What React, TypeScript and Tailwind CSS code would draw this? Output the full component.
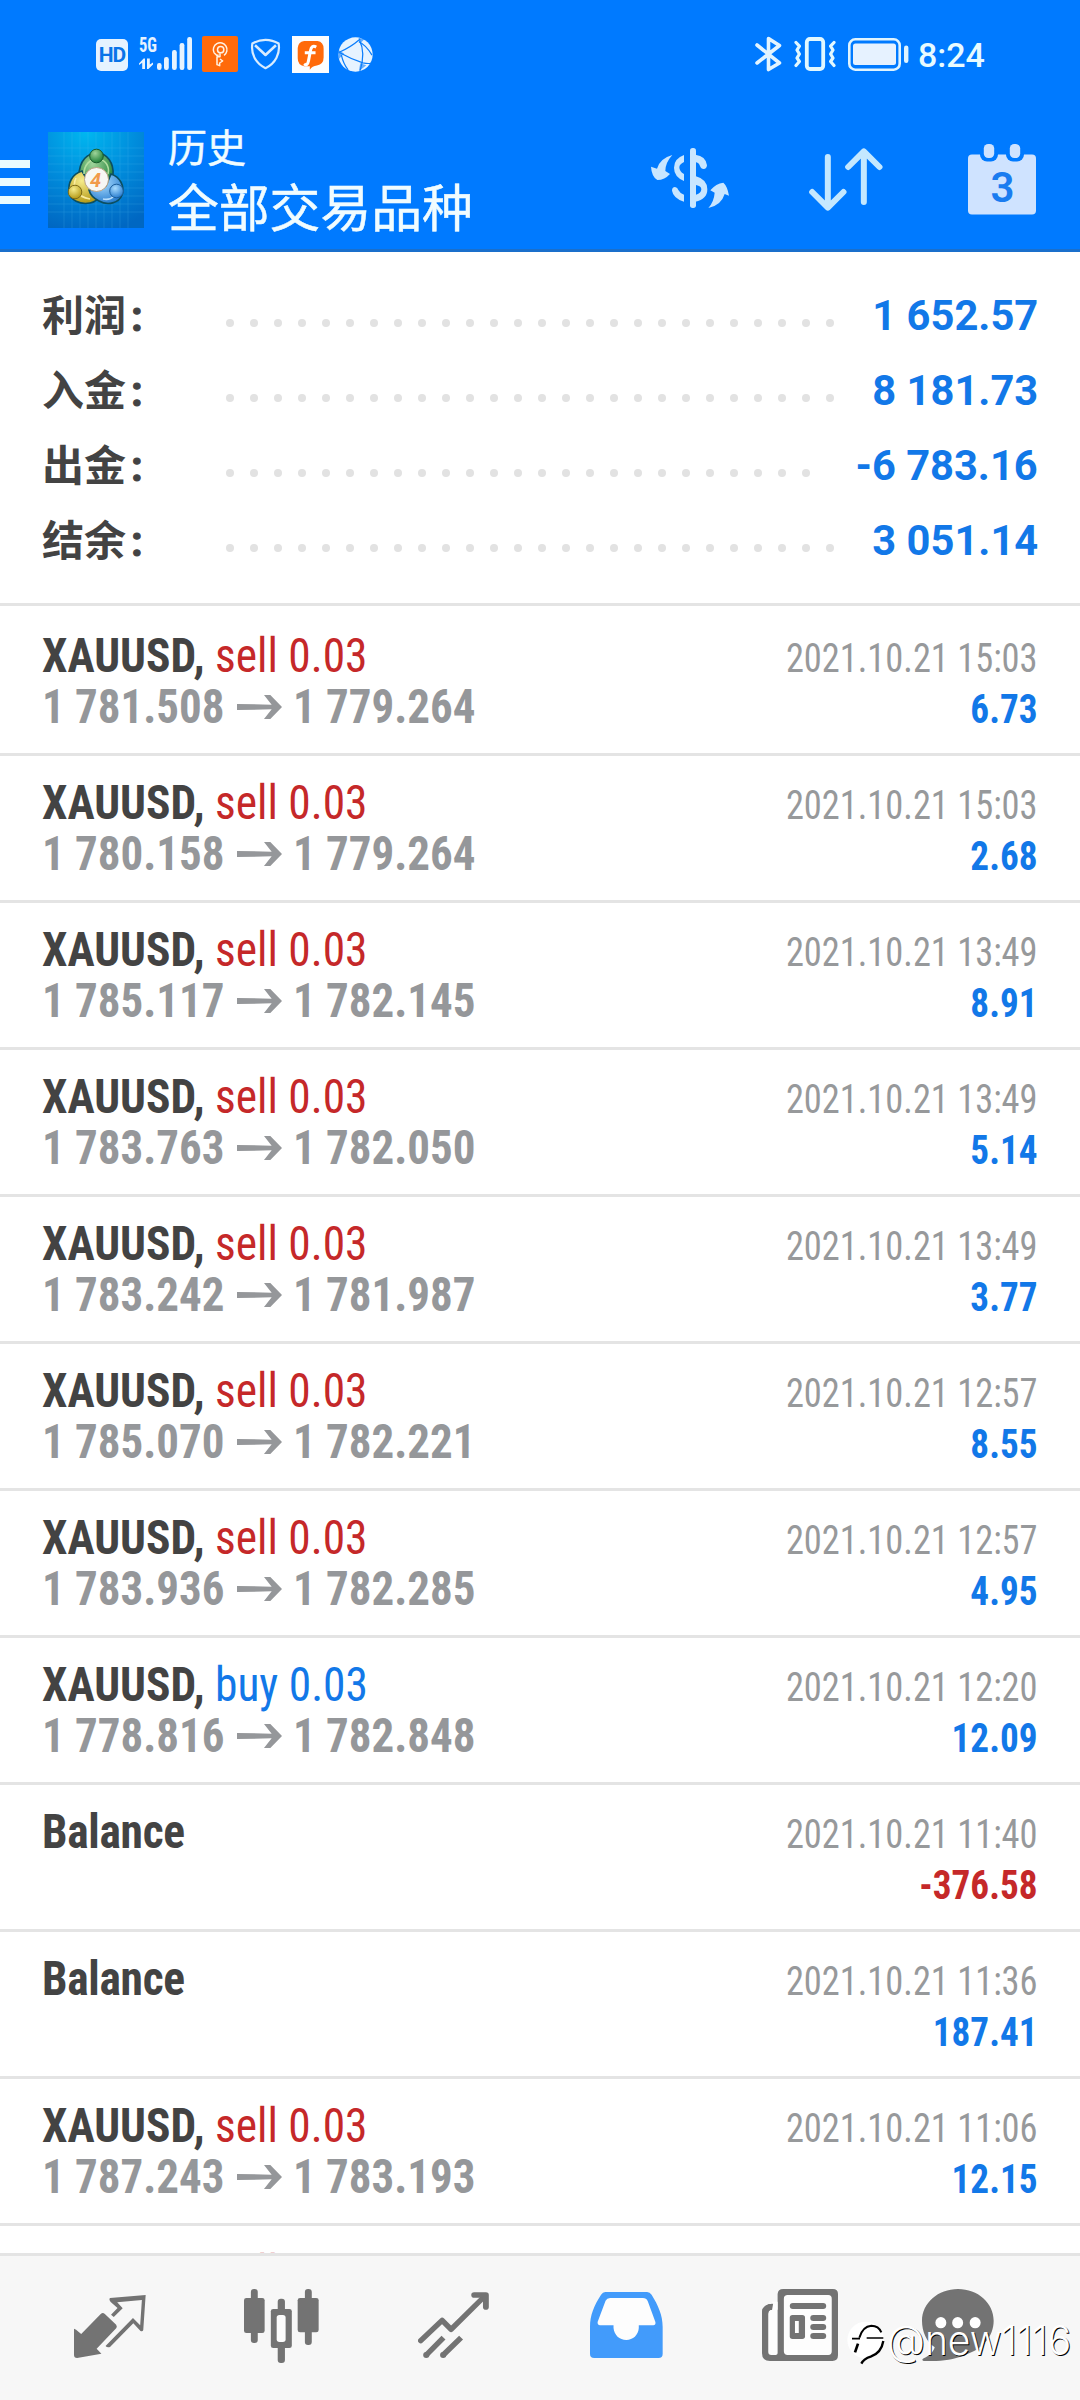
import type { ReactNode } from "react";

type Trade = {
  side?: "sell" | "buy";
  from?: string;
  to?: string;
  time: string;
  profit: string;
};

const summary = [
  { label: "利润", dots: 26, value: "1 652.57" },
  { label: "入金", dots: 26, value: "8 181.73" },
  { label: "出金", dots: 25, value: "-6 783.16" },
  { label: "结余", dots: 26, value: "3 051.14" },
];

const trades: Trade[] = [
  { side: "sell", from: "1 781.508", to: "1 779.264", time: "2021.10.21 15:03", profit: "6.73" },
  { side: "sell", from: "1 780.158", to: "1 779.264", time: "2021.10.21 15:03", profit: "2.68" },
  { side: "sell", from: "1 785.117", to: "1 782.145", time: "2021.10.21 13:49", profit: "8.91" },
  { side: "sell", from: "1 783.763", to: "1 782.050", time: "2021.10.21 13:49", profit: "5.14" },
  { side: "sell", from: "1 783.242", to: "1 781.987", time: "2021.10.21 13:49", profit: "3.77" },
  { side: "sell", from: "1 785.070", to: "1 782.221", time: "2021.10.21 12:57", profit: "8.55" },
  { side: "sell", from: "1 783.936", to: "1 782.285", time: "2021.10.21 12:57", profit: "4.95" },
  { side: "buy", from: "1 778.816", to: "1 782.848", time: "2021.10.21 12:20", profit: "12.09" },
  { time: "2021.10.21 11:40", profit: "-376.58" },
  { time: "2021.10.21 11:36", profit: "187.41" },
  { side: "sell", from: "1 787.243", to: "1 783.193", time: "2021.10.21 11:06", profit: "12.15" },
  { side: "sell", time: "", profit: "" },
];

function SignalIcon() {
  return (
    <svg className="ml-[11px] h-[36px] w-[54px] overflow-visible" viewBox="0 0 54 36" fill="#e6f3ff">
      <text x="0" y="15.5" fontFamily="Roboto" fontStretch="75%" fontWeight="700" fontSize="21" textLength="18" lengthAdjust="spacingAndGlyphs">5G</text>
      <path d="M0 27.5 4.6 22.5H6V33H3.2V26.8L0 29ZM8 22.5H10.8V28.4L14 26.4V28.6L9.4 33H8Z" />
      <rect x="18" y="27" width="4.6" height="7" rx="2.2" />
      <rect x="25" y="21" width="4.8" height="13" rx="2.2" />
      <rect x="33" y="14" width="4.8" height="20" rx="2.2" />
      <rect x="40.6" y="7" width="4.8" height="27" rx="2.2" />
      <rect x="48.2" y="1" width="4.8" height="33" rx="2.2" />
    </svg>
  );
}

function KeyAppIcon() {
  return (
    <svg className="ml-[9px] h-[36px] w-[36px]" viewBox="0 0 108 108">
      <rect width="108" height="108" rx="6" fill="#ff6a0a" />
      <g fill="none" stroke="#fff3e4" strokeWidth="4.5">
        <circle cx="56" cy="41" r="9.5" />
        <path d="M36 50A20.500 20.500 0 1 1 66 58M36 50L44 58H50" />
        <path d="M54 52V62H45V86L53 89V81L62 75 54 69" strokeLinejoin="round" />
      </g>
    </svg>
  );
}

function ShieldIcon() {
  return (
    <svg className="ml-[12px] h-[32px] w-[31px]" viewBox="0 0 92 94" fill="none" stroke="#d8ecff" strokeWidth="6.5" strokeLinejoin="round">
      <path d="M46 5C58 5 72 8 85 16C90 45 76 75 46 89C16 75 2 45 7 16C20 8 34 5 46 5Z" />
      <path d="M15 21 46 50 77 21" strokeWidth="7.5" />
    </svg>
  );
}

function FAppIcon() {
  return (
    <svg className="ml-[11px] h-[37px] w-[37px]" viewBox="0 0 110 110">
      <rect width="110" height="110" fill="#fbfdff" />
      <path d="M36 15H76Q94 18 94 38V64Q94 84 74 88Q60 90 53 100V90H36Q17 86 17 66V36Q18 18 36 15Z" fill="#ff6a0a" />
      <path d="M72 33C62 27 57 33 55 43L49 74C47 85 42 88 36 83M38 50H70" fill="none" stroke="#fff" strokeWidth="9" />
    </svg>
  );
}

function GlobeIcon() {
  return (
    <svg className="ml-[9px] h-[35px] w-[35px]" viewBox="0 0 104 104">
      <circle cx="52" cy="52" r="51" fill="#e6f3ff" />
      <g fill="none" stroke="#0a7dfb" strokeWidth="3.6">
        <path d="M2 46Q36 32 66 6" />
        <path d="M4 46Q40 66 74 77Q90 80 98 78" />
        <path d="M64 10Q82 44 66 100" />
        <path d="M62 14Q84 24 101 54" />
        <path d="M10 54Q16 80 30 98" />
      </g>
      <path d="M60 2 78 7 68 17ZM0 38 18 49 2 66ZM66 78 84 84 62 102Z" fill="#0a7dfb" opacity=".6" />
    </svg>
  );
}

function StatusBar() {
  return (
    <div className="flex h-[108px] items-center pl-[96px]">
      <div className="mt-[2px] flex h-[32px] w-[32px] items-center justify-center rounded-[5px] bg-[#e6f3ff] font-[Roboto] text-[21px] font-bold leading-none tracking-[-1px] text-[#0a74e8]">
        HD
      </div>
      <SignalIcon />
      <KeyAppIcon />
      <ShieldIcon />
      <FAppIcon />
      <GlobeIcon />
      <svg className="ml-[382px] h-[36px] w-[27px]" viewBox="0 0 27 36" fill="none" stroke="#e2f4ff" strokeWidth="3.6" strokeLinejoin="round" strokeLinecap="round">
        <path d="M2 9 24.5 27 13.5 33.5V2.5L24.5 9.5 2 27" />
      </svg>
      <svg className="ml-[12px] h-[34px] w-[42px]" viewBox="0 0 42 34" fill="none" stroke="#e2f8ff" strokeWidth="3.2" strokeLinejoin="round" strokeLinecap="round">
        <rect x="12.8" y="2" width="16.4" height="30" rx="3.2" strokeWidth="3.8" />
        <path d="M2 5.5 5.4 9.2 3 13 5.4 17 3 21 5.4 24.5 2 28.5M40 5.5 36.6 9.2 39 13 36.6 17 39 21 36.6 24.5 40 28.5" />
      </svg>
      <svg className="ml-[12px] h-[33px] w-[61px]" viewBox="0 0 61 33">
        <rect x="1.3" y="1.3" width="50.4" height="30.4" rx="6" fill="none" stroke="#dff4ff" strokeWidth="2.6" />
        <rect x="5" y="5.5" width="43" height="21.5" rx="2.5" fill="#e6f2ff" />
        <rect x="56" y="7.5" width="4.4" height="17.5" rx="2.2" fill="#dff4ff" />
      </svg>
      <span className="ml-[9px] mt-[2px] font-[Roboto] text-[34px] font-medium leading-none text-[#e8fbff]">8:24</span>
    </div>
  );
}

function MetaTraderLogo() {
  const lines = [16, 24, 32, 40, 48, 56, 64, 72, 80];
  return (
    <svg className="ml-[18px] mt-[24px] h-[96px] w-[96px]" viewBox="0 0 96 96">
      <defs>
        <radialGradient id="sky" cx=".4" cy="0" r="1.05">
          <stop offset="0" stopColor="#00b7f0" />
          <stop offset=".5" stopColor="#008cdc" />
          <stop offset="1" stopColor="#0067c2" />
        </radialGradient>
        <radialGradient id="green" cx=".4" cy=".3" r=".7">
          <stop offset="0" stopColor="#9fd49a" />
          <stop offset="1" stopColor="#1f8038" />
        </radialGradient>
        <radialGradient id="yellow" cx=".4" cy=".3" r=".7">
          <stop offset="0" stopColor="#f6ec8c" />
          <stop offset="1" stopColor="#b59a17" />
        </radialGradient>
        <radialGradient id="blue" cx=".4" cy=".3" r=".7">
          <stop offset="0" stopColor="#a8dcff" />
          <stop offset="1" stopColor="#2b7fd0" />
        </radialGradient>
      </defs>
      <rect width="96" height="96" fill="url(#sky)" />
      <g stroke="#5fc8f5" strokeWidth=".6" opacity=".3">
        {lines.map((n) => (
          <g key={n}>
            <path d={`M${n} 0V96`} />
            <path d={`M0 ${n}H96`} />
          </g>
        ))}
      </g>
      <g stroke="#0c4f60" strokeWidth="1.6">
        <path d="M31 44C31 28 40 21 49 21C59 21 66 31 65 43C64 51 60 56 57 58L42 42Z" fill="url(#green)" />
        <path d="M34 39C24 42 20 51 21 60C22 68 32 73 42 71C48 70 51 66 53 63L38 46Z" fill="url(#yellow)" />
        <path d="M63 42C72 45 77 54 74 63C71 71 60 74 51 69C45 66 42 62 41 58L58 54Z" fill="url(#blue)" />
      </g>
      <g fill="none" strokeWidth="1.6" opacity=".9">
        <path d="M36 42C36 33 42 27 49 27C57 27 62 34 60 42" stroke="#b9e3a6" />
        <path d="M28 46C24 54 28 65 42 67" stroke="#fff2a8" />
        <path d="M55 67C64 69 71 62 70 52" stroke="#c3e6ff" />
      </g>
      <circle cx="48.5" cy="24" r="6.8" fill="url(#green)" stroke="#185c2c" />
      <circle cx="27" cy="60" r="6.8" fill="url(#yellow)" stroke="#7d6b18" />
      <circle cx="68.5" cy="59" r="6.8" fill="url(#blue)" stroke="#1a5d9c" />
      <circle cx="48.5" cy="47.5" r="12" fill="#f7f7f4" stroke="#b9a184" strokeWidth="1" />
      <text x="47.5" y="55" textAnchor="middle" fontFamily="Roboto" fontWeight="700" fontStyle="italic" fontSize="20" fill="#f19a4b">4</text>
    </svg>
  );
}

function Header() {
  return (
    <header className="h-[252px] shrink-0 border-b-[3px] border-[#1a6fcb] bg-[#007aff]">
      <StatusBar />
      <div className="flex items-start">
        <div className="mt-[52px] flex w-[30px] flex-col gap-[10px]">
          <div className="h-2 bg-[#e9fbff]" />
          <div className="h-2 bg-[#e9fbff]" />
          <div className="h-2 bg-[#e9fbff]" />
        </div>
        <MetaTraderLogo />
        <div className="ml-6 mt-[13px] w-[483px] font-['Noto_Sans_CJK_SC'] text-[#f0fcff] [-webkit-text-stroke:0.5px_#f0fcff]">
          <div className="text-[39px] leading-[48px]">历史</div>
          <div className="mt-[6px] text-[50.8px] leading-[60px]">全部交易品种</div>
        </div>
        <svg className="mt-[40px] h-[60px] w-[78px]" viewBox="33 54 234 180" fill="#c9e6ff">
          <path d="M97 75Q60 85 51 116L33 110Q35 140 52 150Q74 150 90 132L76 123Q76 98 97 75Z" />
          <path d="M132 75Q102 86 102 113Q102 140 132 153V132Q118 125 118 112Q118 103 132 96Z" />
          <path d="M96 182Q96 171 105 171Q113 172 115 180Q120 190 132 194V215Q100 205 96 182Z" />
          <rect x="150" y="54" width="18" height="180" rx="8" />
          <path d="M166 74Q198 78 201 106Q200 117 191 117Q183 117 180 108Q177 98 166 96Z" />
          <path fillRule="evenodd" d="M166 138Q202 148 202 178Q202 208 166 215ZM168 165V194Q184 190 184 178Q184 168 168 165Z" />
          <path d="M205 234Q222 215 224 188L211 181Q228 160 250 158Q262 168 267 197L254 192Q244 226 205 234Z" />
        </svg>
        <svg className="ml-[80px] mt-[40px] h-[63px] w-[74px]" viewBox="508 54 221 189" fill="none" stroke="#c4e8ff" strokeWidth="18" strokeLinecap="round" strokeLinejoin="round">
          <path d="M564 81V232M517 186 564 233 611 186" />
          <path d="M672 216V66M625 111 672 64 719 111" />
        </svg>
        <svg className="ml-[85px] mt-[36px] h-[71px] w-[68px]" viewBox="0 0 68 71">
          <rect y="10.5" width="68" height="60" rx="4" fill="#cfe3ff" />
          <rect x="12" y="-4" width="18" height="21.5" rx="7" fill="#007aff" />
          <rect x="38" y="-4" width="18" height="21.5" rx="7" fill="#007aff" />
          <rect x="15.8" y="0" width="10.4" height="14" rx="4.5" fill="#cfe3ff" />
          <rect x="41.8" y="0" width="10.4" height="14" rx="4.5" fill="#cfe3ff" />
          <text x="34.5" y="58" textAnchor="middle" fontFamily="Roboto" fontWeight="600" fontSize="42" fill="#1a7cf0">3</text>
        </svg>
      </div>
    </header>
  );
}

function Summary() {
  return (
    <section className="h-[351px] shrink-0 px-[42px] pt-[26px]">
      {summary.map((row) => (
        <div key={row.label} className="flex h-[75px] items-center leading-[75px]">
          <div className="mt-[-3px] flex w-[184px] text-[42px] font-bold text-[#434343]">
            <span className="font-['Noto_Sans_CJK_SC']">{row.label}</span>
            <span className="ml-[5px] mt-[4px] font-[Roboto] [-webkit-text-stroke:1px_#434343]">:</span>
          </div>
          <div className="mt-[15px] flex gap-4">
            {Array.from({ length: row.dots }, (_, i) => (
              <span key={i} className="size-2 rounded-full bg-[#e2e2e2]" />
            ))}
          </div>
          <div className="ml-auto origin-right scale-x-[0.992] font-[Roboto] text-[42px] font-bold text-[#1278e8]">
            {row.value}
          </div>
        </div>
      ))}
    </section>
  );
}

function Price({ children }: { children: ReactNode }) {
  return <span className="w-[183px] origin-left scale-x-[0.937] whitespace-nowrap">{children}</span>;
}

function TradeRow({ trade, first }: { trade: Trade; first: boolean }) {
  const negative = trade.profit.startsWith("-");
  return (
    <div
      className={
        "flex shrink-0 justify-between border-t-[3px] border-[#e4e4e4] px-[42px] leading-[51px] font-[Roboto] [font-stretch:75%] " +
        (first ? "h-[150px] pt-6" : "h-[147px] pt-[21px]")
      }
    >
      <div className="text-[48px]">
        <div className="h-[51px] origin-left scale-x-[0.946] whitespace-nowrap">
          <span className={trade.side ? "font-bold text-[#434343]" : "font-bold tracking-[-0.3px] text-[#434343]"}>
            {trade.side ? "XAUUSD, " : "Balance"}
          </span>
          {trade.side && (
            <span className={trade.side === "sell" ? "text-[#c52829]" : "text-[#1278e8]"}>{trade.side} 0.03</span>
          )}
        </div>
        {trade.from && (
          <div className="flex h-[51px] items-center font-bold text-[#95979a]">
            <Price>{trade.from}</Price>
            <svg className="ml-3 mr-[11px] h-[24px] w-[45px]" viewBox="0 0 135 72" fill="#95979a">
              <path d="M0 27 104 29 81 0H100L135 36 100 72H81L104 43 0 45Z" />
            </svg>
            <Price>{trade.to}</Price>
          </div>
        )}
      </div>
      <div className="pt-[3px] text-right text-[40px]">
        <div className="h-[51px] origin-right scale-x-[0.91] whitespace-nowrap font-normal text-[#97999b]">{trade.time}</div>
        <div
          className={
            "h-[51px] origin-right scale-x-[0.93] whitespace-nowrap font-bold " +
            (negative ? "text-[#c52829]" : "text-[#1278e8]")
          }
        >
          {trade.profit}
        </div>
      </div>
    </div>
  );
}

function BottomNav() {
  return (
    <nav className="flex h-[147px] shrink-0 items-start border-t-[3px] border-[#e4e4e4] bg-[#f7f7f7] pl-[74px] text-[#737373]">
      <svg className="mt-[39px] h-[63px] w-[72px]" viewBox="215 285 210 189" preserveAspectRatio="none" fill="currentColor">
        <path d="M215 386 221 389 236 402 293 342Q299 336 305 342L338 374Q342 380 338 385L281 446 295 461 224 474Q215 474 215 465Z" />
        <path d="M424 285 320 294Q316 298 322 306L342 324 323 344 331 351 357 325 341 307 413 300 408 376 387 354 307 438Q312 444 320 441L388 370 409 393Q415 396 417 390Z" />
      </svg>
      <svg className="ml-[98px] mt-[33px] h-[74px] w-[75px]" viewBox="709 267 218 222" preserveAspectRatio="none" fill="currentColor">
        <rect x="729" y="267" width="20" height="162" rx="9" />
        <rect x="709" y="294" width="60" height="105" rx="7" />
        <rect x="886" y="267" width="20" height="168" rx="9" />
        <rect x="865" y="294" width="61" height="103" rx="7" />
        <rect x="807" y="296" width="21" height="60" rx="9" />
        <rect x="807" y="420" width="21" height="69" rx="9" />
        <rect x="787" y="327" width="61" height="117" rx="7" />
        <rect x="804" y="345" width="26" height="81" rx="8" fill="#fbfbfb" />
      </svg>
      <svg className="ml-[99px] mt-[36px] h-[66px] w-[71px]" viewBox="1214 276 206 198" preserveAspectRatio="none" fill="none" stroke="currentColor" strokeWidth="16" strokeLinejoin="round">
        <path d="M1222 422 1284 361 1310 388 1408 288" strokeLinecap="round" />
        <path d="M1377 285H1411V321" strokeLinecap="round" strokeWidth="17" />
        <path d="M1238 465 1288 413M1287 465 1339 413" />
        <g fill="currentColor" stroke="none">
          <circle cx="1238" cy="465" r="9" />
          <circle cx="1287" cy="465" r="9" />
        </g>
      </svg>
      <svg className="ml-[101px] mt-[36px] h-[66px] w-[73px]" viewBox="146 276 211 198" preserveAspectRatio="none">
        <path
          fill="#429bfb"
          d="M190 276H311Q319 276 324 284C343 316 356 345 356 380V462Q356 474 344 474H158Q146 474 146 462V380C146 345 158 316 178 284Q183 276 190 276Z"
        />
        <path fill="#fdfdfd" d="M204 294Q195 294 191 302L168 366Q167 375 175 376H214V384C216 405 231 420 251 420C270 420 286 405 287 384V376H329Q337 375 335 366L313 304Q309 294 299 294Z" />
      </svg>
      <svg className="ml-[99px] mt-[33px] h-[72px] w-[76px]" viewBox="645 267 219 216" preserveAspectRatio="none" fill="currentColor">
        <path d="M706 267H849Q864 267 864 282V466Q864 483 848 483H668Q645 483 645 460V335Q647 312 677 311L674 329H690V282Q691 267 706 267Z" />
        <path fill="#fdfdfd" d="M719 285Q708 285 708 296V454Q708 465 719 465H836Q846 465 846 454V296Q846 285 836 285ZM663 340Q663 329 674 329V305H690V460Q690 465 684 465H672Q663 465 663 456Z" />
        <path d="M645 335Q647 312 677 311L674 329Q663 329 663 340L655 350Z" />
        <rect x="725" y="309" width="105" height="18" rx="9" />
        <rect x="725" y="345" width="44" height="72" rx="8" />
        <rect x="740" y="363" width="11" height="36" fill="#fdfdfd" />
        <rect x="784" y="345" width="46" height="18" rx="9" />
        <rect x="784" y="372" width="46" height="18" rx="9" />
        <rect x="784" y="399" width="46" height="18" rx="9" />
      </svg>
      <svg className="ml-[84px] mt-[33px] h-[72px] w-[72px]" viewBox="1109 267 210 216" preserveAspectRatio="none" fill="currentColor">
        <path d="M1214 267C1272 267 1318 309 1318 362C1318 410 1285 447 1238 463C1206 480 1160 485 1114 483Q1106 480 1114 475C1132 467 1142 456 1146 442C1122 425 1109 395 1109 362C1109 309 1156 267 1214 267Z" />
        <g fill="#fff">
          <ellipse cx="1164" cy="368" rx="16" ry="17" />
          <ellipse cx="1213" cy="368" rx="16" ry="17" />
          <ellipse cx="1264" cy="368" rx="16" ry="17" />
        </g>
      </svg>
    </nav>
  );
}

function Watermark() {
  return (
    <div className="absolute bottom-[35px] left-[846px] flex items-center">
      <svg className="mt-[2px] h-[44px] w-[40px] overflow-visible" viewBox="0 0 120 132">
        <circle cx="59" cy="63" r="55" fill="#fff" />
        <g fill="none" stroke="#000">
          <path d="M40 56Q50 22 76 20Q98 20 106 40" strokeWidth="6" />
          <path d="M36 74 27 100" strokeWidth="8" />
          <path d="M18 59H42M62 57H112" strokeWidth="5" />
          <path d="M112 66Q106 102 74 113Q54 119 46 134" strokeWidth="7" />
        </g>
      </svg>
      <span className="ml-[1px] origin-left scale-x-[0.952] font-[Inter] text-[41px] font-light leading-[50px] text-white [text-shadow:1px_1px_0_#000]">
        @new1116
      </span>
    </div>
  );
}

export default function App() {
  return (
    <div className="relative flex h-[2400px] w-[1080px] flex-col overflow-hidden bg-white">
      <Header />
      <Summary />
      <main className="flex min-h-0 flex-1 flex-col overflow-hidden">
        {trades.map((trade, i) => (
          <TradeRow key={i} trade={trade} first={i === 0} />
        ))}
      </main>
      <BottomNav />
      <Watermark />
    </div>
  );
}
